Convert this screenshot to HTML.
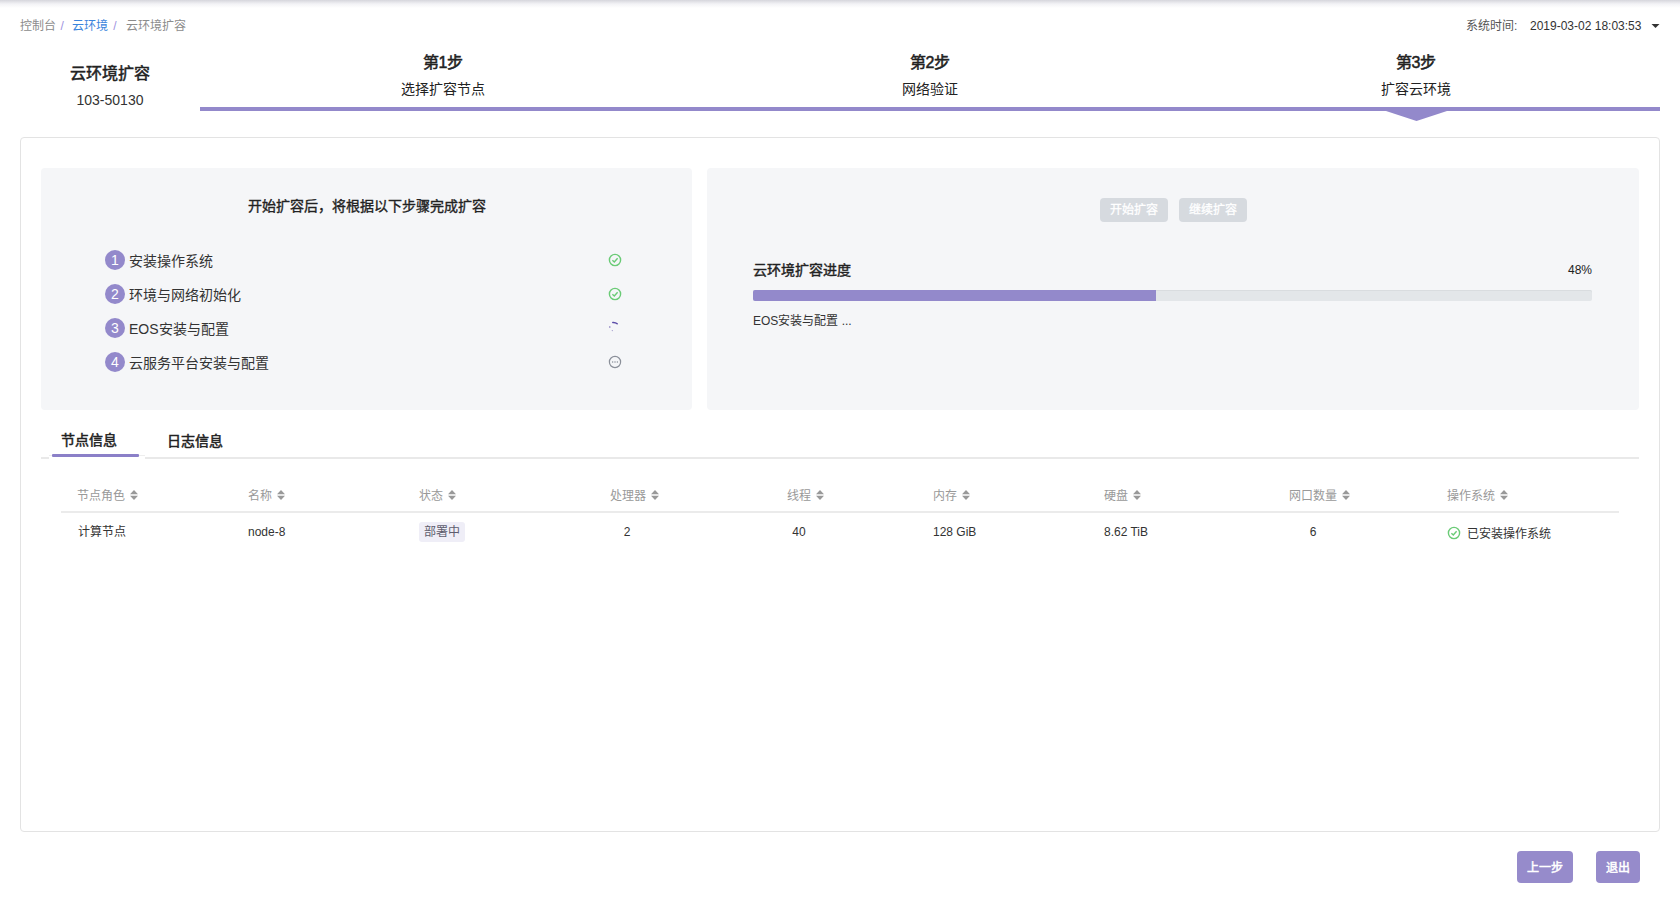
<!DOCTYPE html>
<html lang="zh-CN"><head><meta charset="utf-8">
<style>
*{margin:0;padding:0;box-sizing:border-box}
html,body{width:1680px;height:903px;overflow:hidden;background:#fff}
body{font-family:"Liberation Sans",sans-serif;color:#333;position:relative}
.a{position:absolute;white-space:nowrap;line-height:1}
.shadow{position:absolute;left:0;top:0;width:1680px;height:8px;background:linear-gradient(#d6d6dc,#f3f3f6 50%,#fff)}
.bc{top:20px;font-size:12px;color:#8c8c8c}
.title{-webkit-text-stroke-width:0.5px;font-size:16px;color:#222}
.m{-webkit-text-stroke-width:0.5px}
.stepline{left:200px;top:107px;width:1460px;height:4px;background:#9389cb}
.step{width:486px;text-align:center}
.step .h{font-size:16px;-webkit-text-stroke-width:0.5px;color:#222}
.step .s{font-size:14px;color:#222}
.card{left:20px;top:137px;width:1640px;height:695px;border:1px solid #e3e3e3;border-radius:4px}
.panel{background:#f5f6f8;border-radius:4px}
.num{width:20px;height:20px;border-radius:50%;background:#9389cb;color:#fff;font-size:14px;text-align:center;line-height:20px}
.item{font-size:14px;color:#333}
.btn-dis{background:#d6dadf;color:#fff;-webkit-text-stroke-width:0.3px;font-size:12px;border-radius:4px;text-align:center;line-height:24px;height:24px;width:68px}
.th{font-size:12px;color:#999;top:490px}
.td{font-size:12px;color:#333;top:526px}
.sort{display:inline-block;width:8px;height:10px;vertical-align:top;margin-left:5px}
.btn{background:#968bcb;color:#fff;-webkit-text-stroke-width:0.5px;font-size:12px;border-radius:4px;text-align:center;height:32px;line-height:34px}
</style></head><body>
<div class="shadow"></div>

<!-- breadcrumb -->
<div class="a bc" style="left:20px">控制台<span style="color:#a093e0;margin:0 8.5px 0 4.5px">/</span><span style="color:#3a84dc">云环境</span><span style="color:#a093e0;margin:0 9px 0 5px">/</span>云环境扩容</div>

<!-- system time -->
<div class="a" style="left:1466px;top:20px;font-size:12px;color:#555">系统时间:</div>
<div class="a" style="left:1530px;top:20px;font-size:12px;color:#333">2019-03-02 18:03:53</div>
<svg class="a" style="left:1651px;top:24px" width="9" height="4" viewBox="0 0 9 4"><path d="M0.5 0H8.5L4.5 4Z" fill="#333"/></svg>

<!-- title -->
<div class="a title" style="left:20px;width:180px;text-align:center;top:66px">云环境扩容</div>
<div class="a" style="left:20px;width:180px;text-align:center;top:93px;font-size:14px;color:#333">103-50130</div>

<!-- steps -->
<div class="a step" style="left:200px;top:55px"><div class="h">第1步</div><div class="s" style="margin-top:11px">选择扩容节点</div></div>
<div class="a step" style="left:687px;top:55px"><div class="h">第2步</div><div class="s" style="margin-top:11px">网络验证</div></div>
<div class="a step" style="left:1173px;top:55px"><div class="h">第3步</div><div class="s" style="margin-top:11px">扩容云环境</div></div>
<div class="a stepline"></div>
<svg class="a" style="left:1386px;top:110px" width="61" height="11" viewBox="0 0 61 11"><path d="M0 0H61V1L30.5 11L0 1Z" fill="#9389cb"/></svg>

<!-- card -->
<div class="a card"></div>

<!-- left panel -->
<div class="a panel" style="left:41px;top:168px;width:651px;height:241.5px"></div>
<div class="a" style="left:41px;width:651px;text-align:center;top:199px;font-size:14px;-webkit-text-stroke-width:0.35px;color:#222">开始扩容后，将根据以下步骤完成扩容</div>

<div class="a num" style="left:105px;top:249.5px">1</div>
<div class="a item" style="left:129px;top:254px">安装操作系统</div>
<div class="a num" style="left:105px;top:283.5px">2</div>
<div class="a item" style="left:129px;top:288px">环境与网络初始化</div>
<div class="a num" style="left:105px;top:317.5px">3</div>
<div class="a item" style="left:129px;top:322px">EOS安装与配置</div>
<div class="a num" style="left:105px;top:351.5px">4</div>
<div class="a item" style="left:129px;top:356px">云服务平台安装与配置</div>

<svg class="a" style="left:608px;top:253px" width="14" height="14" viewBox="0 0 14 14"><circle cx="7" cy="7" r="5.6" fill="none" stroke="#6acb76" stroke-width="1.4"/><path d="M4.4 7.2L6.3 9L9.6 5.3" fill="none" stroke="#6acb76" stroke-width="1.4"/></svg>
<svg class="a" style="left:608px;top:287px" width="14" height="14" viewBox="0 0 14 14"><circle cx="7" cy="7" r="5.6" fill="none" stroke="#6acb76" stroke-width="1.4"/><path d="M4.4 7.2L6.3 9L9.6 5.3" fill="none" stroke="#6acb76" stroke-width="1.4"/></svg>
<svg class="a" style="left:606px;top:318px" width="16" height="16" viewBox="0 0 16 16"><path d="M6.8 4.4Q9.5 4.2 11.2 5.8" fill="none" stroke="#5b4ca8" stroke-width="1.5" stroke-linecap="round"/><circle cx="3.8" cy="9" r="0.8" fill="#7b70b8"/><circle cx="6.3" cy="12.6" r="0.6" fill="#9a92c8"/></svg>
<svg class="a" style="left:608px;top:355px" width="14" height="14" viewBox="0 0 14 14"><circle cx="7" cy="7" r="5.6" fill="none" stroke="#8a8f99" stroke-width="1.2"/><circle cx="4.6" cy="7" r="0.75" fill="#8a8f99"/><circle cx="7" cy="7" r="0.75" fill="#8a8f99"/><circle cx="9.4" cy="7" r="0.75" fill="#8a8f99"/></svg>

<!-- right panel -->
<div class="a panel" style="left:707px;top:168px;width:932px;height:241.5px"></div>
<div class="a btn-dis" style="left:1099.5px;top:198px">开始扩容</div>
<div class="a btn-dis" style="left:1178.5px;top:198px">继续扩容</div>
<div class="a" style="left:753px;top:263px;font-size:14px;-webkit-text-stroke-width:0.4px;color:#222">云环境扩容进度</div>
<div class="a" style="left:1568px;top:264px;font-size:12px;color:#222">48%</div>
<div class="a" style="left:753px;top:290px;width:839px;height:11px;background:#e3e6e9;border-radius:2px;overflow:hidden;box-shadow:inset 0 1px 0 #d9dcdf"><div style="width:403px;height:11px;background:#9389cb"></div></div>
<div class="a" style="left:753px;top:314.5px;font-size:12px;color:#333">EOS安装与配置 ...</div>

<!-- tabs -->
<div class="a" style="left:41px;top:457px;width:1598px;height:2px;background:#e9e9e9"></div>
<div class="a" style="left:49px;top:455px;width:96px;height:5px;background:#fff;border-top:1px solid #eee"></div>
<div class="a" style="left:52px;top:454px;width:87px;height:3px;background:#8b80c8;border-radius:1px"></div>
<div class="a" style="left:61px;top:433px;font-size:14px;-webkit-text-stroke-width:0.5px;color:#222">节点信息</div>
<div class="a" style="left:167px;top:434px;font-size:14px;-webkit-text-stroke-width:0.5px;color:#222">日志信息</div>

<!-- table -->
<div class="a" style="left:61px;top:511px;width:1558px;height:2px;background:#ebebeb"></div>
<div class="a th" style="left:77px">节点角色<svg class="sort" viewBox="0 0 8 10"><path d="M4 0L8 4.2H0Z M4 10L8 5.8H0Z" fill="#999"/></svg></div>
<div class="a th" style="left:248px">名称<svg class="sort" viewBox="0 0 8 10"><path d="M4 0L8 4.2H0Z M4 10L8 5.8H0Z" fill="#999"/></svg></div>
<div class="a th" style="left:419px">状态<svg class="sort" viewBox="0 0 8 10"><path d="M4 0L8 4.2H0Z M4 10L8 5.8H0Z" fill="#999"/></svg></div>
<div class="a th" style="left:610px">处理器<svg class="sort" viewBox="0 0 8 10"><path d="M4 0L8 4.2H0Z M4 10L8 5.8H0Z" fill="#999"/></svg></div>
<div class="a th" style="left:787px">线程<svg class="sort" viewBox="0 0 8 10"><path d="M4 0L8 4.2H0Z M4 10L8 5.8H0Z" fill="#999"/></svg></div>
<div class="a th" style="left:933px">内存<svg class="sort" viewBox="0 0 8 10"><path d="M4 0L8 4.2H0Z M4 10L8 5.8H0Z" fill="#999"/></svg></div>
<div class="a th" style="left:1104px">硬盘<svg class="sort" viewBox="0 0 8 10"><path d="M4 0L8 4.2H0Z M4 10L8 5.8H0Z" fill="#999"/></svg></div>
<div class="a th" style="left:1289px">网口数量<svg class="sort" viewBox="0 0 8 10"><path d="M4 0L8 4.2H0Z M4 10L8 5.8H0Z" fill="#999"/></svg></div>
<div class="a th" style="left:1447px">操作系统<svg class="sort" viewBox="0 0 8 10"><path d="M4 0L8 4.2H0Z M4 10L8 5.8H0Z" fill="#999"/></svg></div>
<div class="a td" style="left:78px">计算节点</div>
<div class="a td" style="left:248px">node-8</div>
<div class="a" style="left:419px;top:521.5px;width:46px;height:20px;background:#efeef7;border-radius:3px;font-size:12px;color:#5e5d6e;text-align:center;line-height:21px">部署中</div>
<div class="a td" style="left:610px;width:34px;text-align:center">2</div>
<div class="a td" style="left:787px;width:24px;text-align:center">40</div>
<div class="a td" style="left:933px">128 GiB</div>
<div class="a td" style="left:1104px">8.62 TiB</div>
<div class="a td" style="left:1289px;width:48px;text-align:center">6</div>
<svg class="a" style="left:1447px;top:526px" width="14" height="14" viewBox="0 0 14 14"><circle cx="7" cy="7" r="5.6" fill="none" stroke="#6acb76" stroke-width="1.4"/><path d="M4.4 7.2L6.3 9L9.6 5.3" fill="none" stroke="#6acb76" stroke-width="1.4"/></svg>
<div class="a td" style="left:1467px;top:528px">已安装操作系统</div>

<!-- bottom buttons -->
<div class="a btn" style="left:1517px;top:851px;width:56px">上一步</div>
<div class="a btn" style="left:1596px;top:851px;width:44px">退出</div>
</body></html>
